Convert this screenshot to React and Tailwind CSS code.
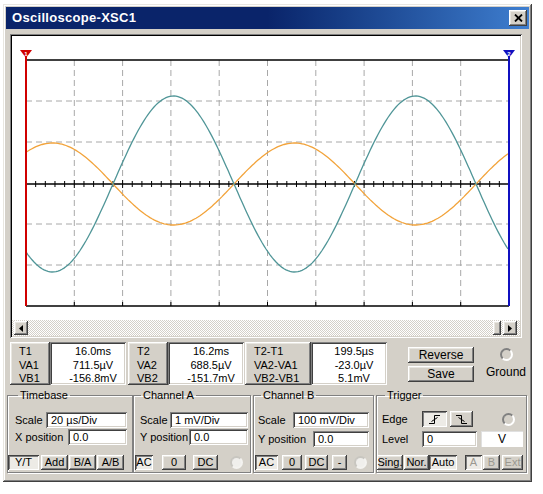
import React from 'react';

const raised = 'bg-[#d4d0c8] shadow-[inset_-1px_-1px_#404040,inset_1px_1px_#ffffff,inset_-2px_-2px_#808080,inset_2px_2px_#e8e6e0]';
const pressed = 'bg-[#edebe6] shadow-[inset_1px_1px_#404040,inset_-1px_-1px_#ffffff,inset_2px_2px_#808080]';
const sunken = 'bg-white shadow-[inset_1px_1px_#808080,inset_-1px_-1px_#ffffff,inset_2px_2px_#404040,inset_-2px_-2px_#d4d0c8]';

// plot geometry, page coordinates
const L = 26;
const R = 509;
const T = 60;
const B = 306;
const MID = 184;
const DX = (R - L) / 10;
const DY = (B - T) / 6;

const wave = (amp) => {
  const pts = [];
  for (let x = L; x <= R; x += 2) {
    const y = MID + amp * Math.sin((2 * Math.PI * (x - 113)) / 242);
    pts.push(`${x},${y.toFixed(1)}`);
  }
  return pts.join(' ');
};

const Btn = ({ children, down = false, dim = false, className = '' }) => (
  <div
    className={`${down ? pressed : raised} ${dim ? 'text-[#9a9890]' : 'text-black'} h-[15px] flex items-center justify-center text-[11px] leading-none shrink-0 ${className}`}
  >
    {children}
  </div>
);

const Field = ({ value, className = '' }) => (
  <div className={`${sunken} h-[16px] flex items-center pl-[5px] text-[11px] leading-none shrink-0 ${className}`}>{value}</div>
);

const Radio = ({ dim = false }) => (
  <div
    className={
      dim
        ? 'w-[13px] h-[13px] rounded-full border-2 border-t-[#c8c6c0] border-l-[#c8c6c0] border-b-[#f4f3f0] border-r-[#f4f3f0] bg-[#f0efec]'
        : 'w-[13px] h-[13px] rounded-full border-2 border-t-[#808080] border-l-[#808080] border-b-white border-r-white bg-[#d4d0c8]'
    }
  />
);

const Group = ({ title, legend = 'ml-[10px]', className = '', children }) => (
  <fieldset className={`min-w-0 shrink-0 h-[84px] border border-[#808080] shadow-[1px_1px_#ffffff,inset_1px_1px_#ffffff] ${className}`}>
    <legend className={`${legend} px-[2px] text-[11px] leading-[12px]`}>{title}</legend>
    {children}
  </fieldset>
);

const Cursor = ({ x, color, n }) => (
  <g>
    <line x1={x} y1={52} x2={x} y2={B} stroke={color} strokeWidth="2" />
    <polygon points={`${x - 6},50 ${x + 6},50 ${x},58`} fill={color} />
    <text x={x} y={55.5} fontSize="6" fill="#fff" textAnchor="middle" fontFamily="Liberation Sans, sans-serif" fontWeight="bold">
      {n}
    </text>
  </g>
);

const Scope = () => {
  const vlines = [];
  for (let i = 1; i < 10; i++) vlines.push(L + DX * i);
  const hlines = [1, 2, 4, 5].map((j) => T + DY * j);
  const ticks = [];
  for (let i = 1; i < 50; i++) ticks.push(L + (DX / 5) * i);
  return (
    <svg width="508" height="284" viewBox="12 36 508 284" className="block">
      <rect x="12" y="36" width="508" height="284" fill="#fff" />
      {vlines.map((x) => (
        <line key={x} x1={x} y1={T} x2={x} y2={B} stroke="#a8a8a8" strokeWidth="1" strokeDasharray="6 4" />
      ))}
      {hlines.map((y) => (
        <line key={y} x1={L} y1={y} x2={R} y2={y} stroke="#a8a8a8" strokeWidth="1" strokeDasharray="6 4" />
      ))}
      <line x1={L} y1={T} x2={R} y2={T} stroke="#000" strokeWidth="1.5" />
      <line x1={L} y1={B} x2={R} y2={B} stroke="#000" strokeWidth="1.5" />
      <line x1={L} y1={MID} x2={R} y2={MID} stroke="#000" strokeWidth="1.5" />
      {ticks.map((x, i) => (
        <line key={i} x1={x} y1={(i + 1) % 5 === 0 ? MID - 4 : MID - 3} x2={x} y2={(i + 1) % 5 === 0 ? MID + 4 : MID + 3} stroke="#000" strokeWidth="1" />
      ))}
      {vlines.map((x) => (
        <line key={`b${x}`} x1={x} y1={B - 4} x2={x} y2={B} stroke="#000" strokeWidth="1" />
      ))}
      <polyline points={wave(41)} fill="none" stroke="#f2a33a" strokeWidth="1.3" />
      <polyline points={wave(-88)} fill="none" stroke="#4f9597" strokeWidth="1.3" />
      <Cursor x={L} color="#d00000" n="1" />
      <Cursor x={R} color="#1010c0" n="2" />
    </svg>
  );
};

const Readout = ({ labels, values, labelW }) => (
  <div className="flex">
    <div className={`${raised} h-[43px] pl-[9px] pt-[3px] leading-[13.5px] text-[11px] ${labelW}`}>
      {labels.map((l) => (
        <div key={l}>{l}</div>
      ))}
    </div>
    <div className={`${sunken} w-[76px] h-[43px] pt-[3px] pl-[10px] leading-[13.5px] text-[11px] text-center`}>
      {values.map((v) => (
        <div key={v}>{v}</div>
      ))}
    </div>
  </div>
);

const EdgeIcon = ({ falling }) => (
  <svg width="13" height="11" viewBox="0 0 13 11">
    {falling ? (
      <path d="M1 1.5H6.5V9.5H12M3.5 3.5L9.5 7.5" stroke="#000" strokeWidth="1" fill="none" />
    ) : (
      <path d="M1 9.5H6.5V1.5H12M3.5 7.5L9.5 3.5" stroke="#000" strokeWidth="1" fill="none" />
    )}
  </svg>
);

export default function App() {
  return (
    <div className="w-[543px] h-[494px] bg-white font-['Liberation_Sans',Arial,sans-serif] text-black text-[11px] overflow-hidden">
      <div className="ml-[3px] mt-[4px] w-[529px] h-[478px] p-[3px] bg-[#d4d0c8] shadow-[inset_-1px_-1px_#404040,inset_1px_1px_#e8e6e0,inset_-2px_-2px_#808080,inset_2px_2px_#ffffff] flex flex-col">
        {/* title bar */}
        <div className="h-[22px] flex items-center justify-between pl-[6px] pr-[2px] bg-gradient-to-r from-[#0a246a] via-[#0a246a] to-[#3f7fd0]">
          <span className="text-white font-bold text-[13px] tracking-[0.3px]">Oscilloscope-XSC1</span>
          <div className={`${raised} w-[18px] h-[16px] flex items-center justify-center`}>
            <svg width="9" height="8" viewBox="0 0 9 8">
              <path d="M1 0.5L8 7.5M8 0.5L1 7.5" stroke="#000" strokeWidth="1.8" />
            </svg>
          </div>
        </div>

        {/* screen */}
        <div className="mt-[5px] ml-[4px] w-[512px] h-[304px] p-[2px] shadow-[inset_1px_1px_#808080,inset_-1px_-1px_#ffffff,inset_2px_2px_#000000,inset_-2px_-2px_#d4d0c8] flex flex-col">
          <Scope />
          <div className="h-[16px] flex items-center pl-[2px] pr-[3px] bg-[repeating-conic-gradient(#ffffff_0%_25%,#d4d0c8_0%_50%)] bg-[length:2px_2px]">
            <div className={`${raised} w-[14px] h-[14px] flex items-center justify-center`}>
              <svg width="4" height="7" viewBox="0 0 4 7"><path d="M4 0V7L0 3.5Z" fill="#000" /></svg>
            </div>
            <div className="flex-1" />
            <div className={`${raised} w-[8px] h-[14px]`} />
            <div className="w-[2px]" />
            <div className={`${raised} w-[14px] h-[14px] flex items-center justify-center`}>
              <svg width="4" height="7" viewBox="0 0 4 7"><path d="M0 0V7L4 3.5Z" fill="#000" /></svg>
            </div>
          </div>
        </div>

        {/* readouts */}
        <div className="mt-[4px] ml-[4px] flex items-start">
          <Readout labels={['T1', 'VA1', 'VB1']} values={['16.0ms', '711.5µV', '-156.8mV']} labelW="w-[40px]" />
          <div className="w-[2px]" />
          <Readout labels={['T2', 'VA2', 'VB2']} values={['16.2ms', '688.5µV', '-151.7mV']} labelW="w-[40px]" />
          <div className="w-[1px]" />
          <Readout labels={['T2-T1', 'VA2-VA1', 'VB2-VB1']} values={['199.5µs', '-23.0µV', '5.1mV']} labelW="w-[66px]" />
          <div className="ml-[21px] mt-[5px] flex flex-col gap-[3px]">
            <Btn className="w-[66px] h-[16px] text-[12px]">Reverse</Btn>
            <Btn className="w-[66px] h-[16px] text-[12px]">Save</Btn>
          </div>
          <div className="ml-[13px] mt-[6px] flex flex-col items-center w-[38px]">
            <Radio />
            <span className="mt-[5px] text-[12px] leading-none">Ground</span>
          </div>
        </div>

        {/* controls */}
        <div className="mt-[4px] ml-[1px] flex">
          <Group title="Timebase" className="w-[126px]">
            <div className="flex items-center h-[16px] mt-[11px] ml-[7px]">
              <span className="w-[31px]">Scale</span>
              <Field value="20 µs/Div" className="w-[81px]" />
            </div>
            <div className="flex items-center h-[16px] mt-[1px] ml-[7px]">
              <span className="w-[53px]">X position</span>
              <Field value="0.0" className="w-[59px]" />
            </div>
            <div className="flex mt-[10px]">
              <Btn down className="w-[31px]">Y/T</Btn>
              <Btn className="w-[27px] ml-[2px]">Add</Btn>
              <Btn className="w-[27px] ml-[1px]">B/A</Btn>
              <Btn className="w-[27px] ml-[1px]">A/B</Btn>
            </div>
          </Group>
          <Group title="Channel A" legend="ml-[7px]" className="w-[118px]">
            <div className="flex items-center h-[16px] mt-[11px] ml-[6px]">
              <span className="w-[30px]">Scale</span>
              <Field value="1 mV/Div" className="w-[78px]" />
            </div>
            <div className="flex items-center h-[16px] mt-[1px] ml-[6px]">
              <span className="w-[49px] whitespace-nowrap">Y position</span>
              <Field value="0.0" className="w-[59px]" />
            </div>
            <div className="flex items-center mt-[10px] ml-[1px]">
              <Btn down className="w-[18px]">AC</Btn>
              <Btn className="w-[24px] ml-[9px]">0</Btn>
              <Btn className="w-[25px] ml-[7px]">DC</Btn>
              <div className="ml-[12px]"><Radio dim /></div>
            </div>
          </Group>
          <Group title="Channel B" legend="ml-[7px]" className="w-[121px] ml-[2px]">
            <div className="flex items-center h-[16px] mt-[11px] ml-[4px]">
              <span className="w-[35px]">Scale</span>
              <Field value="100 mV/Div" className="w-[76px]" />
            </div>
            <div className="flex items-center h-[16px] mt-[3px] ml-[4px]">
              <span className="w-[55px] whitespace-nowrap">Y position</span>
              <Field value="0.0" className="w-[56px]" />
            </div>
            <div className="flex items-center mt-[8px] ml-[1px]">
              <Btn down className="w-[23px]">AC</Btn>
              <Btn className="w-[20px] ml-[4px]">0</Btn>
              <Btn className="w-[23px] ml-[3px]">DC</Btn>
              <Btn className="w-[15px] ml-[4px]">-</Btn>
              <div className="ml-[7px]"><Radio dim /></div>
            </div>
          </Group>
          <Group title="Trigger" legend="ml-[8px]" className="w-[151px] ml-[2px]">
            <div className="flex items-center h-[16px] mt-[10px] ml-[5px]">
              <span className="w-[40px]">Edge</span>
              <Btn down className="w-[25px] h-[16px]"><EdgeIcon /></Btn>
              <Btn className="w-[23px] h-[16px] ml-[3px]"><EdgeIcon falling /></Btn>
              <div className="ml-[29px]"><Radio /></div>
            </div>
            <div className="flex items-center h-[16px] mt-[4px] ml-[5px]">
              <span className="w-[40px]">Level</span>
              <Field value="0" className="w-[55px]" />
              <div className="ml-[4px] w-[42px] h-[16px] bg-white shadow-[inset_1px_1px_#e0e0e0] flex items-center justify-center text-[12px] shrink-0">V</div>
            </div>
            <div className="flex items-center mt-[8px]">
              <Btn className="w-[26px]">Sing.</Btn>
              <Btn className="w-[25px] ml-[1px]">Nor.</Btn>
              <Btn down className="w-[28px]">Auto</Btn>
              <Btn down dim className="w-[17px] ml-[8px]">A</Btn>
              <Btn dim className="w-[17px] ml-[1px]">B</Btn>
              <Btn dim className="w-[21px] ml-[2px]">Ext</Btn>
            </div>
          </Group>
        </div>
      </div>
    </div>
  );
}
